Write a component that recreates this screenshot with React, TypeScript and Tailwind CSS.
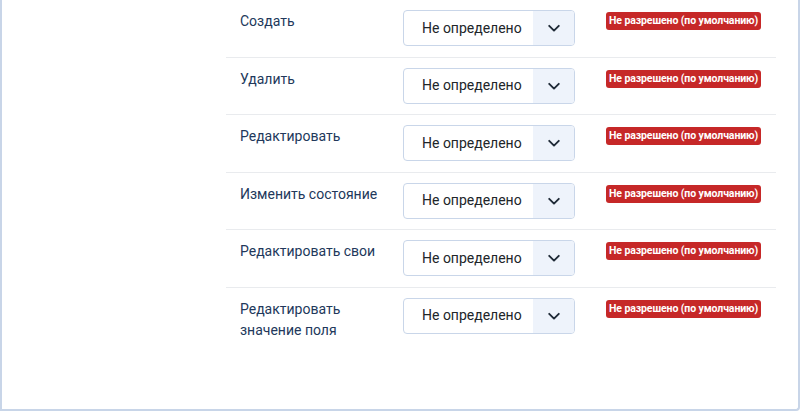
const actions = [
  ['Создать'],
  ['Удалить'],
  ['Редактировать'],
  ['Изменить состояние'],
  ['Редактировать свои'],
  ['Редактировать', 'значение поля'],
];

function ChevronDown() {
  return (
    <svg width="14" height="14" viewBox="0 0 14 14" fill="none">
      <polyline points="2.2,4.8 7,9.6 11.8,4.8" stroke="#1f2a37" strokeWidth="1.9" strokeLinecap="round" strokeLinejoin="round" />
    </svg>
  );
}

function PermissionRow({ label }: { label: string[] }) {
  return (
    <div className="flex items-start pt-[10px] pb-[10.5px] pl-[14px] border-b border-[#e9ebee] last:border-b-0">
      <div className="w-[163px] shrink-0 text-[14px] leading-[21px] text-[#22385b] pt-[1px]">
        {label.map((line) => (
          <div key={line}>{line}</div>
        ))}
      </div>
      <div className="flex h-[36px] w-[172px] shrink-0 rounded-[4px] border border-[#c9d6e9] overflow-hidden bg-white">
        <div className="flex-1 flex items-center pl-[18px] text-[14px] text-[#212529]">Не определено</div>
        <div className="w-[41px] flex items-center justify-center bg-[#eef3fb]">
          <ChevronDown />
        </div>
      </div>
      <span className="ml-[31px] mt-[2px] rounded-[3px] bg-[#c62828] px-[3px] h-[18px] flex items-center text-[10.5px] font-bold text-white tracking-[-0.1px]">
        Не разрешено (по умолчанию)
      </span>
    </div>
  );
}

export default function App() {
  return (
    <div className="w-[800px] h-[411px] bg-white font-['Roboto',sans-serif] border-l-2 border-r-2 border-b-2 border-[#c8d5e8] rounded-br-[4px] overflow-hidden flex">
      <div className="w-[224px] shrink-0" />
      <div className="w-[550px] flex flex-col">
        {actions.map((label) => (
          <PermissionRow key={label.join(' ')} label={label} />
        ))}
      </div>
    </div>
  );
}
